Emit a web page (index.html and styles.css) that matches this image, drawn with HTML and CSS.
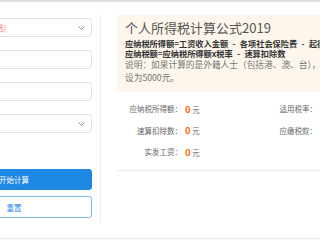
FILE: index.html
```html
<!DOCTYPE html>
<html lang="zh-CN">
<head>
<meta charset="utf-8">
<title>个人所得税计算器</title>
<link rel="stylesheet" href="styles.css">
</head>
<body>
<div class="top-bar"></div>
<div class="page">
  <aside class="form">
    <div class="field select"><span class="hint">请选择城市(必选)</span><svg class="chev" width="7" height="4" viewBox="0 0 7 4"><path d="M0.5 0.5 L3.5 3.5 L6.5 0.5" fill="none" stroke="#8a8a8a" stroke-width="1"/></svg></div>
    <div class="field"></div>
    <div class="field"></div>
    <div class="field select"><span></span><svg class="chev" width="7" height="4" viewBox="0 0 7 4"><path d="M0.5 0.5 L3.5 3.5 L6.5 0.5" fill="none" stroke="#8a8a8a" stroke-width="1"/></svg></div>
    <div class="buttons">
      <button class="btn primary">开始计算</button>
      <button class="btn ghost">重置</button>
    </div>
  </aside>
  <main class="result">
    <div class="notice">
      <h1 class="title">个人所得税计算公式2019</h1>
      <p class="formula">应纳税所得额=工资收入金额 - 各项社会保险费 - 起征点</p>
      <p class="formula">应纳税额=应纳税所得额x税率 - 速算扣除数</p>
      <p class="desc">说明：如果计算的是外籍人士（包括港、澳、台），则个税起征点应<br>设为5000元。</p>
    </div>
    <div class="grid">
      <span class="label">应纳税所得额：</span><span class="val"><b>0</b> 元</span>
      <span class="label">适用税率：</span><span class="val"><b>0</b>%</span>
      <span class="label">速算扣除数：</span><span class="val"><b>0</b> 元</span>
      <span class="label">应缴税款：</span><span class="val"><b>0</b> 元</span>
      <span class="label">实发工资：</span><span class="val"><b>0</b> 元</span>
    </div>
  </main>
</div>
<div class="bottom-line"></div>
</body>
</html>
```
FILE: styles.css
```css
* { box-sizing: border-box; }
html, body { margin: 0; padding: 0; }
body {
  width: 320px;
  height: 240px;
  overflow: hidden;
  background: #fff;
  font-family: "Noto Sans CJK SC", "Noto Sans", sans-serif;
  color: #666;
}
.top-bar { height: 2px; background: #dcdcdc; }
.page {
  display: flex;
  margin: 13px 0 0 -60px;
  height: 207px;
  width: 520px;
}
.form {
  width: 152px;
  flex: none;
  padding-top: 3px;
  display: flex;
  flex-direction: column;
}
.field {
  height: 19px;
  border: 1px solid #e2e2e2;
  border-radius: 3px;
  margin-bottom: 13px;
  display: flex;
  align-items: center;
  justify-content: space-between;
  padding: 0 6px 0 8px;
  font-size: 7.5px;
}
.hint { color: #f08a80; white-space: nowrap; }
.chev { display: block; }
.buttons {
  margin-top: 23px;
  display: flex;
  flex-direction: column;
  gap: 6px;
}
.btn {
  font-family: inherit;
  font-size: 7.5px;
  border-radius: 3px;
  padding: 0;
  margin: 0;
  cursor: pointer;
}
.btn.primary {
  height: 21px;
  background: #1e88e5;
  border: 1px solid #1e88e5;
  color: #fff;
  padding-right: 4px;
}
.btn.ghost {
  height: 22px;
  background: #fff;
  border: 1px solid #7fbbee;
  color: #1e88e5;
  padding-right: 4px;
}
.result {
  margin-left: 8px;
  border-left: 1px solid #ececec;
  padding-left: 16px;
  flex: none;
  width: 360px;
}
.notice {
  background: #fdf6ec;
  padding: 4px 8px 8px 8px;
}
.title {
  margin: 0;
  font-size: 13px;
  line-height: 17px;
  font-weight: normal;
  color: #555;
  margin-bottom: 2px;
}
.formula {
  margin: 0;
  font-size: 8.2px;
  line-height: 10px;
  font-weight: bold;
  color: #333;
  white-space: nowrap;
  word-spacing: 2.5px;
}
.desc {
  margin: 0;
  font-size: 8.7px;
  line-height: 13px;
  color: #777;
  white-space: nowrap;
}
.grid {
  display: grid;
  grid-template-columns: 65px 68px 67px 1fr;
  grid-auto-rows: 21.5px;
  align-items: center;
  padding-top: 6px;
  padding-bottom: 7px;
  border-bottom: 1px solid #ececec;
  font-size: 7.5px;
  color: #666;
}
.label { text-align: right; white-space: nowrap; }
.val { padding-left: 3px; white-space: nowrap; }
.val b { color: #ff6a00; font-size: 9.5px; font-weight: bold; }
.bottom-line {
  margin-top: 16px;
  height: 1px;
  background: #ececec;
}
```
